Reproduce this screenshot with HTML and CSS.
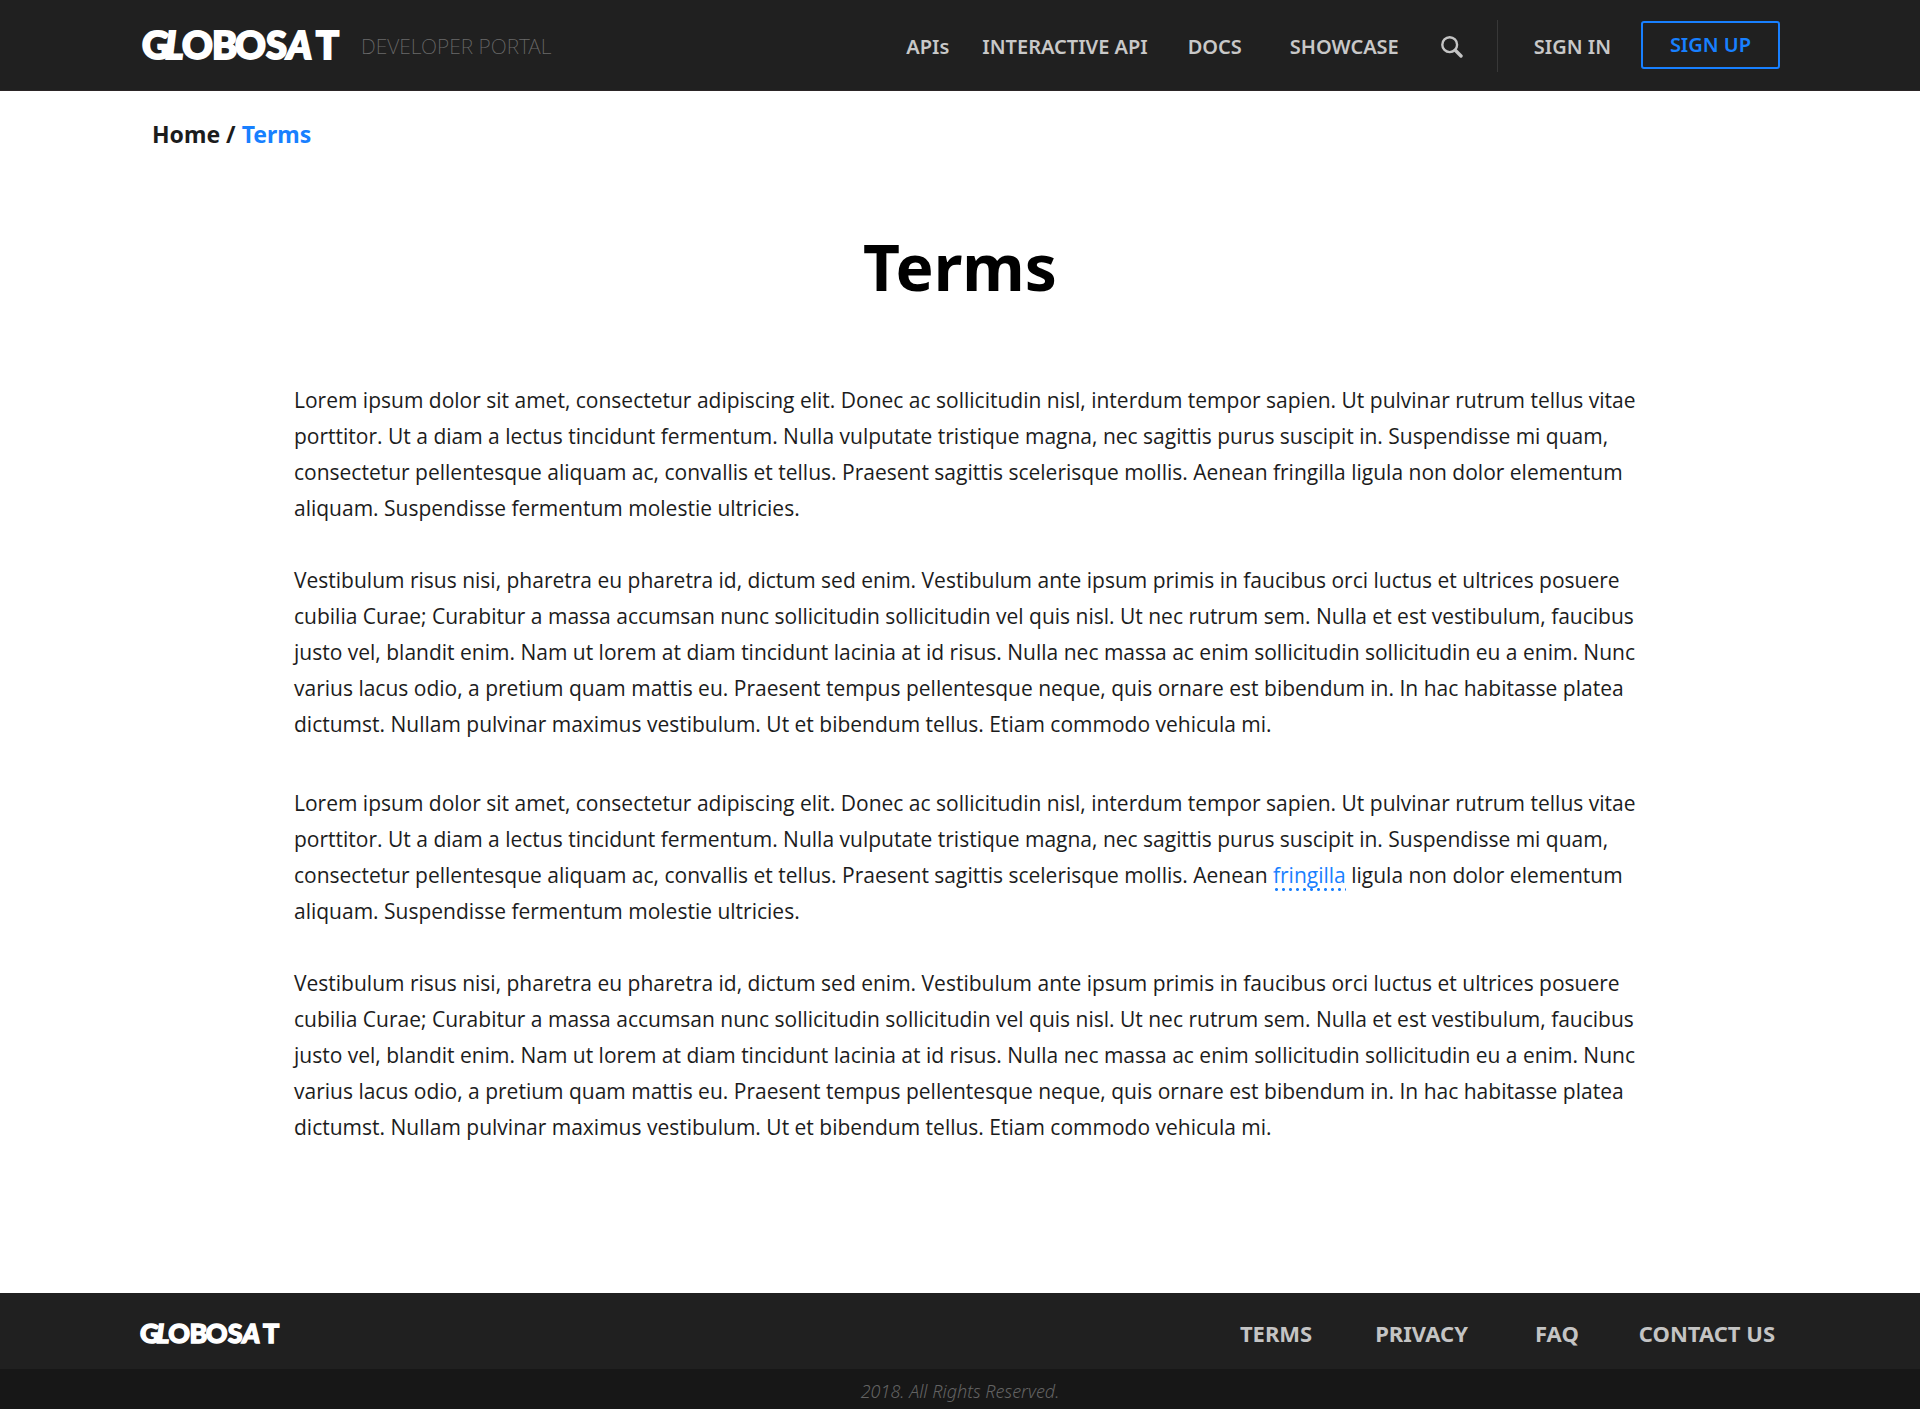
FILE: index.html
```html
<!DOCTYPE html>
<html lang="en">
<head>
<meta charset="utf-8">
<title>Terms - Globosat Developer Portal</title>
<link rel="stylesheet" href="styles.css">
</head>
<body>
<header class="header">
  <div class="wrap header-row">
    <a class="brand" href="#">
      <svg class="logo" viewBox="0 0 198 34" role="img" aria-label="Globosat">
        <text x="0 23 40 70 93 124 145 174" y="30">G<tspan class="logo-slant">L</tspan>OBOS<tspan class="logo-slant">A</tspan>T</text>
      </svg>
      <span class="tagline">DEVELOPER PORTAL</span>
    </a>
    <nav class="nav">
      <a href="#">APIs</a>
      <a class="nav-api" href="#">INTERACTIVE API</a>
      <a class="nav-docs" href="#">DOCS</a>
      <a class="nav-showcase" href="#">SHOWCASE</a>
      <button class="search" type="button" aria-label="Search">
        <svg width="22" height="22" viewBox="0 0 22 22"><circle cx="8.7" cy="8.7" r="7.4"/><path class="handle" d="M14.3 14.3l5.7 5.7"/></svg>
      </button>
    </nav>
    <div class="account">
      <a class="signin" href="#">SIGN IN</a>
      <button class="signup" type="button">SIGN UP</button>
    </div>
  </div>
</header>
<main class="wrap main">
  <nav class="crumbs" aria-label="Breadcrumb"><a href="#">Home</a> / <a class="current" href="#">Terms</a></nav>
  <h1>Terms</h1>
  <article class="terms">
    <section>
      <p>Lorem ipsum dolor sit amet, consectetur adipiscing elit. Donec ac sollicitudin nisl, interdum tempor sapien. Ut pulvinar rutrum tellus vitae porttitor. Ut a diam a lectus tincidunt fermentum. Nulla vulputate tristique magna, nec sagittis purus suscipit in. Suspendisse mi quam, consectetur pellentesque aliquam ac, convallis et tellus. Praesent sagittis scelerisque mollis. Aenean fringilla ligula non dolor elementum aliquam. Suspendisse fermentum molestie ultricies.</p>
      <p>Vestibulum risus nisi, pharetra eu pharetra id, dictum sed enim. Vestibulum ante ipsum primis in faucibus orci luctus et ultrices posuere cubilia Curae; Curabitur a massa accumsan nunc sollicitudin sollicitudin vel quis nisl. Ut nec rutrum sem. Nulla et est vestibulum, faucibus justo vel, blandit enim. Nam ut lorem at diam tincidunt lacinia at id risus. Nulla nec massa ac enim sollicitudin sollicitudin eu a enim. Nunc varius lacus odio, a pretium quam mattis eu. Praesent tempus pellentesque neque, quis ornare est bibendum in. In hac habitasse platea dictumst. Nullam pulvinar maximus vestibulum. Ut et bibendum tellus. Etiam commodo vehicula mi.</p>
    </section>
    <section>
      <p>Lorem ipsum dolor sit amet, consectetur adipiscing elit. Donec ac sollicitudin nisl, interdum tempor sapien. Ut pulvinar rutrum tellus vitae porttitor. Ut a diam a lectus tincidunt fermentum. Nulla vulputate tristique magna, nec sagittis purus suscipit in. Suspendisse mi quam, consectetur pellentesque aliquam ac, convallis et tellus. Praesent sagittis scelerisque mollis. Aenean <a href="#">fringilla</a> ligula non dolor elementum aliquam. Suspendisse fermentum molestie ultricies.</p>
      <p>Vestibulum risus nisi, pharetra eu pharetra id, dictum sed enim. Vestibulum ante ipsum primis in faucibus orci luctus et ultrices posuere cubilia Curae; Curabitur a massa accumsan nunc sollicitudin sollicitudin vel quis nisl. Ut nec rutrum sem. Nulla et est vestibulum, faucibus justo vel, blandit enim. Nam ut lorem at diam tincidunt lacinia at id risus. Nulla nec massa ac enim sollicitudin sollicitudin eu a enim. Nunc varius lacus odio, a pretium quam mattis eu. Praesent tempus pellentesque neque, quis ornare est bibendum in. In hac habitasse platea dictumst. Nullam pulvinar maximus vestibulum. Ut et bibendum tellus. Etiam commodo vehicula mi.</p>
    </section>
  </article>
</main>
<footer>
  <div class="footer-main">
    <div class="wrap footer-row">
      <a class="footer-brand" href="#">
        <svg class="logo logo-small" viewBox="0 0 198 34" role="img" aria-label="Globosat">
          <text x="0 23 40 70 93 124 145 174" y="31">G<tspan class="logo-slant">L</tspan>OBOS<tspan class="logo-slant">A</tspan>T</text>
        </svg>
      </a>
      <nav class="footer-nav">
        <a href="#">TERMS</a>
        <a class="footer-privacy" href="#">PRIVACY</a>
        <a class="footer-faq" href="#">FAQ</a>
        <a href="#">CONTACT US</a>
      </nav>
    </div>
  </div>
  <p class="copyright">2018. All Rights Reserved.</p>
</footer>
</body>
</html>
```
FILE: styles.css
```css
* { box-sizing: border-box; }
body {
  margin: 0;
  min-height: 100vh;
  display: flex;
  flex-direction: column;
  background: #fff;
  color: #1c1c1c;
  font-family: "Noto Sans", "Open Sans", sans-serif;
}
a { color: inherit; text-decoration: none; }
button { font: inherit; background: none; cursor: pointer; }
.wrap { width: 100%; max-width: 1688px; margin: 0 auto; padding: 0 24px; }

.logo {
  display: block;
  width: 198px;
  height: 34px;
  overflow: visible;
  font-family: Lato, sans-serif;
  font-weight: 900;
  font-size: 38px;
  fill: #fff;
  stroke: #fff;
  stroke-width: 2px;
}
.logo-slant { font-style: italic; }
.logo-small { width: 140px; height: 24px; }

.header { background: #202020; border-bottom: 1px solid #2b2526; }
.header-row { display: flex; align-items: center; height: 90px; padding-top: 2px; }
.brand { display: flex; align-items: center; gap: 21px; margin-left: 2px; }
.tagline { font-size: 21px; line-height: 30px; font-weight: 200; color: #6a6a6a; white-space: nowrap; }

.nav, .account { display: flex; align-items: center; font-size: 20px; line-height: 28px; font-weight: 600; color: #c8c8c8; white-space: nowrap; }
.nav { margin-left: auto; padding-top: 2px; }
.nav-api { margin-left: 33px; }
.nav-docs { margin-left: 40px; }
.nav-showcase { margin-left: 48px; }
.search { margin-left: 42px; padding: 0; border: 0; }
.search svg { display: block; fill: none; stroke: #c4c4c4; stroke-width: 2.4px; }
.search .handle { stroke-width: 3.4px; stroke-linecap: round; }
.account { gap: 30px; height: 52px; margin-left: 34px; padding-left: 36px; border-left: 1px solid #383838; }
.signin { padding-top: 2px; }
.signup { width: 139px; height: 48px; margin-bottom: 2px; padding: 0; border: 2px solid #1880ff; border-radius: 3px; color: #1880ff; }

.main { flex: 1; }
.crumbs { padding: 25px 0 0 12px; font-size: 23px; line-height: 36px; font-weight: 700; }
.current { color: #1880ff; }
h1 { margin: 67px 0; text-align: center; color: #000; font-size: 64px; line-height: 96px; font-weight: 700; }
.terms { padding: 0 136px 0 154px; font-family: "Open Sans", sans-serif; font-size: 21px; line-height: 36px; }
.terms section { margin-bottom: 43px; }
.terms p { margin: 0; }
.terms p + p { margin-top: 36px; }
.terms a {
  padding-bottom: 3px;
  color: #1880ff;
  background: radial-gradient(circle, #1880ff 1px, transparent 2px) left bottom / 7px 5px repeat-x;
}

.footer-main { background: #202020; }
.footer-row { display: flex; align-items: center; justify-content: space-between; height: 76px; padding-top: 4px; }
.footer-nav { display: flex; gap: 60px; margin-right: 5px; font-size: 22px; line-height: 30px; font-weight: 700; color: #c4c4c4; }
.footer-privacy { margin-left: 3px; }
.footer-faq { margin-left: 7px; }
.copyright { margin: 0; padding-top: 4px; background: #171717; color: #636363; text-align: center; font-size: 18px; line-height: 36px; font-style: italic; font-weight: 300; }
```
